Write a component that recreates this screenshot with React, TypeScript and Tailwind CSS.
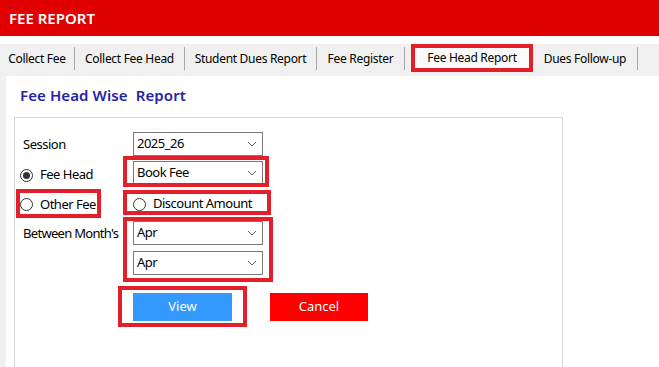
import { ReactNode } from 'react';

const FONT = "font-['Noto_Sans','Open_Sans',sans-serif]";

// red annotation frame drawn over a control
function Mark({ className }: { className: string }) {
  return <div className={`pointer-events-none absolute border-4 border-[#e3202a] ${className}`} />;
}

function Chevron() {
  return (
    <svg width="10" height="6" viewBox="0 0 10 6" className="shrink-0">
      <polyline points="1,1 5,5 9,1" fill="none" stroke="#606060" strokeWidth="1" />
    </svg>
  );
}

function Select({ value }: { value: string }) {
  return (
    <div className="flex h-[24px] w-[130px] items-center justify-between border border-[#7a7a7a] bg-white pl-[3px] pr-[5px] text-[13px] text-black">
      <span>{value}</span>
      <Chevron />
    </div>
  );
}

function Radio({ checked = false, label }: { checked?: boolean; label: string }) {
  return (
    <div className="flex items-center gap-[7px] text-[13px] text-black">
      <span className="flex h-[13px] w-[13px] items-center justify-center rounded-full border border-[#333] bg-white">
        {checked && <span className="h-[7px] w-[7px] rounded-full bg-[#333]" />}
      </span>
      <span>{label}</span>
    </div>
  );
}

function Tab({ width, children }: { width: string; children: ReactNode }) {
  return (
    <div className={`mt-[3px] flex h-[23px] items-center ${width}`}>
      <span className="flex-1 text-center">{children}</span>
      <span className="h-[23px] w-px bg-[#a8a8a8]" />
    </div>
  );
}

export default function App() {
  return (
    <div className={`h-[367px] w-[659px] overflow-hidden bg-white ${FONT}`}>
      {/* Header */}
      <div className="flex h-[36px] items-center bg-[#e00000] pl-[9px] text-[15px] font-semibold text-white">
        FEE REPORT
      </div>

      {/* Tabs */}
      <div className="mt-[8px] flex h-[32px] items-start bg-[#f0f0f0] text-[12px] tracking-[-0.3px] text-black">
        <Tab width="w-[75px]">Collect Fee</Tab>
        <Tab width="w-[110px]">Collect Fee Head</Tab>
        <Tab width="w-[132px]">Student Dues Report</Tab>
        <Tab width="w-[88px]">Fee Register</Tab>
        <div className="ml-[6px] flex h-[28px] w-[122px] items-center justify-center border-4 border-[#e3202a] bg-[#fbfbfb]">
          Fee Head Report
        </div>
        <Tab width="w-[105px]">Dues Follow-up</Tab>
      </div>

      {/* Body */}
      <div className="flex">
        <div className="h-[300px] w-[6px] bg-[#f0f0f0]" />
        <div className="flex-1">
          <div className="ml-[14px] mt-[9px] whitespace-pre text-[15px] font-semibold leading-[20px] tracking-[0.1px] text-[#2424a6]">
            Fee Head Wise  Report
          </div>

          <div className="ml-[8px] mt-[12px] h-[260px] w-[549px] border border-[#d6d6d6] pl-[8px] tracking-[-0.5px]">
            {/* Session */}
            <div className="mt-[13px] flex h-[25px] items-center">
              <div className="w-[110px] pt-[2px] text-[13px] text-black">Session</div>
              <Select value="2025_26" />
            </div>

            {/* Fee Head */}
            <div className="mt-[5px] flex h-[24px] items-center">
              <div className="-ml-[3px] w-[113px] pt-[4px]">
                <Radio checked label="Fee Head" />
              </div>
              <div className="relative">
                <Select value="Book Fee" />
                <Mark className="-left-[10px] -top-[5px] h-[31px] w-[146px]" />
              </div>
            </div>

            {/* Other fee / discount */}
            <div className="mt-[6px] flex h-[25px]">
              <div className="relative -ml-[3px] flex h-full w-[113px] items-center pt-[2px]">
                <Radio label="Other Fee" />
                <Mark className="-left-[4px] -top-[2px] h-[29px] w-[85px]" />
              </div>
              <div className="relative flex h-full items-center pt-[1px]">
                <Radio label="Discount Amount" />
                <Mark className="-left-[10px] -top-[1px] h-[25px] w-[148px]" />
              </div>
            </div>

            {/* Months */}
            <div className="mt-[5px] flex items-start">
              <div className="flex h-[24px] w-[110px] items-center pt-[2px] text-[13px] tracking-[-0.7px] text-black">Between Month's</div>
              <div className="relative flex flex-col gap-[6px]">
                <Select value="Apr" />
                <Select value="Apr" />
                <Mark className="-left-[10px] -top-[4px] h-[65px] w-[150px]" />
              </div>
            </div>

            {/* Buttons */}
            <div className="ml-[110px] mt-[18px] flex gap-[38px] text-[13px] tracking-normal text-white">
              <div className="relative">
                <button className="h-[28px] w-[99px] bg-[#3399ff]">View</button>
                <Mark className="-left-[15px] -top-[7px] h-[41px] w-[129px]" />
              </div>
              <button className="h-[28px] w-[98px] bg-[#ff0000]">Cancel</button>
            </div>
          </div>
        </div>
      </div>
    </div>
  );
}
